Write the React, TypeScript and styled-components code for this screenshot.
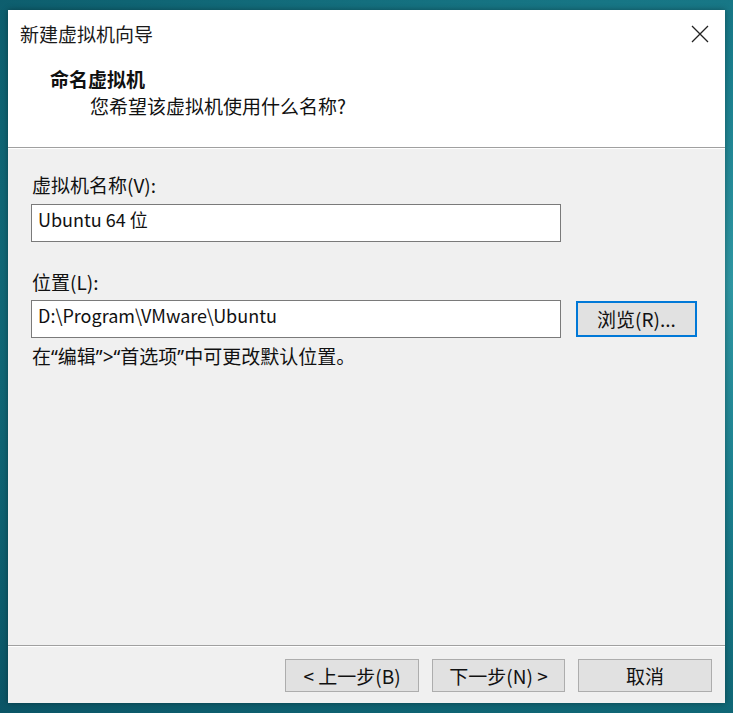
import * as React from "react"
import styled, { createGlobalStyle } from "styled-components"

const GlobalStyle = createGlobalStyle`
  html, body {
    margin: 0;
    padding: 0;
  }
  body {
    width: 733px;
    height: 713px;
    overflow: hidden;
    background: radial-gradient(ellipse at 100% 40%, #2f97a3 0%, #1b7f8e 35%, #0f6473 75%, #0b5566 100%);
    font-family: "Noto Sans CJK SC", "Noto Sans", sans-serif;
    color: #111;
  }
`

const Dialog = styled.div`
  margin: 10px 0 0 8px;
  width: 717px;
  height: 693px;
  background: #f0f0f0;
  display: flex;
  flex-direction: column;
  box-shadow: 0 0 6px rgba(0, 0, 0, 0.35);
`

const Header = styled.div`
  background: #fff;
  height: 137px;
  border-bottom: 1px solid #a0a0a0;
  box-shadow: 0 1px 0 #fff;
  display: flex;
  flex-direction: column;
`

const TitleBar = styled.div`
  display: flex;
  align-items: center;
  justify-content: space-between;
  padding: 13px 16px 0 12px;
  height: 22px;
`

const Title = styled.span`
  font-size: 19px;
  line-height: 22px;
  color: #1a1a1a;
`

const CloseBox = styled.span`
  display: flex;
  width: 18px;
  height: 18px;
`

const Heading = styled.div`
  margin: 23px 0 0 42px;
  font-size: 19px;
  line-height: 22px;
  font-weight: 700;
`

const SubHeading = styled.div`
  margin: 5px 0 0 82px;
  font-size: 19px;
  line-height: 22px;
`

const Body = styled.div`
  flex: 1;
  padding: 26px 0 0 23px;
  display: flex;
  flex-direction: column;
`

const Label = styled.label<{ $gap: number }>`
  margin-top: ${p => p.$gap}px;
  padding-left: 1px;
  font-size: 19px;
  line-height: 22px;
`

const Row = styled.div`
  display: flex;
  align-items: center;
  gap: 15px;
  margin-top: 7px;
`

const TextBox = styled.div<{ $gap?: number }>`
  box-sizing: border-box;
  width: 530px;
  height: 38px;
  margin-top: ${p => p.$gap ?? 0}px;
  background: #fff;
  border: 1px solid #7a7a7a;
  padding: 3px 6px;
  font-size: 18px;
  line-height: 22px;
`

const Button = styled.button<{ $focused?: boolean; $width?: number }>`
  box-sizing: border-box;
  width: ${p => p.$width ?? 134}px;
  height: ${p => (p.$focused ? 36 : 33)}px;
  background: #e1e1e1;
  border: ${p => (p.$focused ? "2px solid #0078d7" : "1px solid #adadad")};
  border-radius: 0;
  padding: 0;
  font-family: inherit;
  font-size: 19px;
  line-height: 22px;
  color: #111;
`

const Hint = styled.div`
  margin-top: 8px;
  padding-left: 1px;
  font-family: "Noto Sans", "Noto Sans CJK SC", sans-serif;
  font-size: 19px;
  line-height: 22px;
`

const Footer = styled.div`
  height: 58px;
  border-top: 1px solid #a0a0a0;
  box-shadow: inset 0 1px 0 #fff;
  display: flex;
  justify-content: flex-end;
  align-items: flex-start;
  gap: 13px;
  padding: 13px 13px 0 0;
  box-sizing: border-box;
`

const CloseIcon = () => (
  <CloseBox>
    <svg width="18" height="18" viewBox="0 0 18 18">
      <path d="M1 1 L17 17 M17 1 L1 17" stroke="#222" strokeWidth="1.3" fill="none" />
    </svg>
  </CloseBox>
)

export default function App() {
  return (
    <>
      <GlobalStyle />
      <Dialog>
        <Header>
          <TitleBar>
            <Title>新建虚拟机向导</Title>
            <CloseIcon />
          </TitleBar>
          <Heading>命名虚拟机</Heading>
          <SubHeading>您希望该虚拟机使用什么名称?</SubHeading>
        </Header>
        <Body>
          <Label $gap={0}>虚拟机名称(V):</Label>
          <TextBox $gap={8}>Ubuntu 64 位</TextBox>
          <Label $gap={29}>位置(L):</Label>
          <Row>
            <TextBox>D:\Program\VMware\Ubuntu</TextBox>
            <Button $focused $width={121}>浏览(R)...</Button>
          </Row>
          <Hint>在“编辑”&gt;“首选项”中可更改默认位置。</Hint>
        </Body>
        <Footer>
          <Button>&lt; 上一步(B)</Button>
          <Button $width={133}>下一步(N) &gt;</Button>
          <Button>取消</Button>
        </Footer>
      </Dialog>
    </>
  )
}
